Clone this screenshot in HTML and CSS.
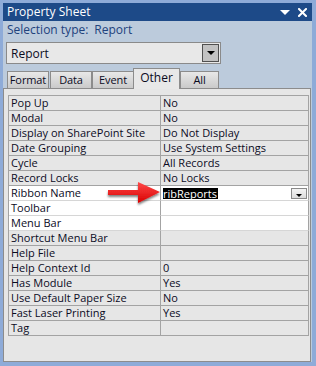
FILE: index.html
```html
<!DOCTYPE html>
<html>
<head>
<meta charset="utf-8">
<link rel="stylesheet" href="styles.css">
</head>
<body>
<div class="window">
  <div class="titlebar">
    <span class="title">Property Sheet</span>
    <div class="tb-icons">
      <svg class="tb-menu" width="10" height="6" viewBox="0 0 10 6"><polygon points="0,0 10,0 5,5" fill="#ffffff"/></svg>
      <svg class="tb-close" width="9" height="9" viewBox="0 0 9 9"><path d="M1 1 L8 8 M8 1 L1 8" stroke="#ffffff" stroke-width="2" stroke-linecap="square"/></svg>
    </div>
  </div>
  <div class="body">
    <div class="seltype"><span>Selection type:</span><span class="seltype-val">Report</span></div>
    <div class="combo">
      <span class="combo-text">Report</span>
      <span class="combo-btn"><svg width="8" height="5" viewBox="0 0 8 5"><polygon points="0,0 8,0 4,4" fill="#000"/></svg></span>
    </div>
    <div class="tabs">
      <div class="tab tab-format">Format</div>
      <div class="tab tab-data">Data</div>
      <div class="tab tab-event">Event</div>
      <div class="tab tab-other active">Other</div>
      <div class="tab tab-all">All</div>
    </div>
    <div class="panel">
      <div class="grid">
        <div class="cell name">Pop Up</div><div class="cell val">No</div>
        <div class="cell name">Modal</div><div class="cell val">No</div>
        <div class="cell name">Display on SharePoint Site</div><div class="cell val">Do Not Display</div>
        <div class="cell name">Date Grouping</div><div class="cell val">Use System Settings</div>
        <div class="cell name">Cycle</div><div class="cell val">All Records</div>
        <div class="cell name">Record Locks</div><div class="cell val">No Locks</div>
        <div class="cell name white">Ribbon Name</div><div class="cell val white edit"><span class="sel">ribReports</span><span class="cell-btn"><svg width="6" height="3" viewBox="0 0 6 3"><polygon points="0,0 6,0 3,3" fill="#000"/></svg></span></div>
        <div class="cell name white">Toolbar</div><div class="cell val white"></div>
        <div class="cell name white">Menu Bar</div><div class="cell val white"></div>
        <div class="cell name">Shortcut Menu Bar</div><div class="cell val"></div>
        <div class="cell name">Help File</div><div class="cell val"></div>
        <div class="cell name">Help Context Id</div><div class="cell val">0</div>
        <div class="cell name">Has Module</div><div class="cell val">Yes</div>
        <div class="cell name">Use Default Paper Size</div><div class="cell val">No</div>
        <div class="cell name">Fast Laser Printing</div><div class="cell val">Yes</div>
        <div class="cell name">Tag</div><div class="cell val"></div>
      </div>
    </div>
  </div>
  <svg class="arrow" width="62" height="30" viewBox="0 0 62 30">
    <defs>
      <linearGradient id="ag" x1="0" y1="0" x2="0" y2="1">
        <stop offset="0" stop-color="#ff4a4a"/>
        <stop offset="1" stop-color="#d80000"/>
      </linearGradient>
      <filter id="sh" x="-20%" y="-20%" width="150%" height="160%">
        <feDropShadow dx="0" dy="2" stdDeviation="1.3" flood-color="#000" flood-opacity="0.5"/>
      </filter>
    </defs>
    <polygon filter="url(#sh)" points="3,12 33,12 33,4 55,14 33,25 33,17 3,17" fill="url(#ag)"/>
  </svg>
</div>
</body>
</html>
```
FILE: styles.css
```css
html, body {
  margin: 0;
  padding: 0;
  background: #ffffff;
}
.window {
  position: relative;
  width: 316px;
  height: 366px;
  box-sizing: border-box;
  background: #8eabd8;
  padding: 3px 4px 4px 3px;
  display: flex;
  flex-direction: column;
  font-family: "Open Sans", "Noto Sans", sans-serif;
  font-size: 11px;
  color: #0b0b1e;
}
.titlebar {
  height: 18px;
  background: #1d4a88;
  display: flex;
  align-items: center;
  justify-content: space-between;
  padding: 0 0 0 4px;
  color: #ffffff;
}
.title {
  font-size: 12px;
  line-height: 18px;
}
.tb-icons {
  display: flex;
  align-items: center;
  gap: 8px;
  padding-right: 5px;
}
.tb-menu {
  display: block;
  margin-top: 1px;
}
.tb-close {
  display: block;
}
.body {
  flex: 1;
  background: #bccbdc;
  display: flex;
  flex-direction: column;
}
.seltype {
  height: 18px;
  line-height: 18px;
  padding-left: 4px;
  font-size: 12px;
  color: #21427c;
  display: flex;
}
.seltype-val {
  margin-left: 6px;
}
.combo {
  margin: 3px 0 0 3px;
  width: 215px;
  height: 22px;
  box-sizing: border-box;
  border: 1px solid #8a8a8a;
  background: #e8e8e8;
  display: flex;
  align-items: center;
  justify-content: space-between;
  padding: 0 1px 0 4px;
}
.combo-text {
  font-size: 12px;
}
.combo-btn {
  width: 17px;
  height: 18px;
  box-sizing: border-box;
  border: 1px solid #505050;
  background: #c2c2c2;
  display: flex;
  align-items: center;
  justify-content: center;
}
.combo-btn svg {
  display: block;
  margin-top: 1px;
}
.tabs {
  margin-top: 4px;
  height: 20px;
  display: flex;
  align-items: flex-end;
  padding-left: 4px;
  position: relative;
  z-index: 2;
}
.tab {
  height: 17px;
  box-sizing: border-box;
  border: 1px solid #8c8c8c;
  border-bottom: none;
  background: linear-gradient(#e8e8e8, #cacaca);
  text-align: center;
  line-height: 16px;
  font-size: 11px;
  letter-spacing: -0.1px;
}
.tab-format { width: 42px; }
.tab-data { width: 42px; margin-left: 1px; }
.tab-event { width: 42px; }
.tab-other { width: 47px; margin-left: -1px; }
.tab-all { width: 39px; }
.tab.active {
  height: 21px;
  margin-bottom: -1px;
  background: #e8e8e8;
  line-height: 17px;
  font-size: 12px;
  letter-spacing: 0;
}
.panel {
  flex: 1;
  margin: 0 1px 0 0;
  border: 1px solid #8c8c8c;
  background: #e6e6e6;
  padding: 6px 1px 0 4px;
}
.grid {
  display: grid;
  grid-template-columns: 152px 148px;
  border-top: 1px solid #a3a3a3;
  border-left: 1px solid #a3a3a3;
}
.cell {
  height: 15px;
  box-sizing: border-box;
  border-right: 1px solid #a3a3a3;
  border-bottom: 1px solid #a3a3a3;
  padding-left: 2px;
  line-height: 14px;
  white-space: nowrap;
  overflow: hidden;
}
.cell.white {
  background: #ffffff;
  border-bottom-color: #d6d6d6;
}
.edit {
  display: flex;
  align-items: center;
  justify-content: space-between;
  padding-right: 1px;
}
.sel {
  background: #000000;
  color: #ffffff;
  line-height: 11px;
  height: 11px;
  padding-right: 1px;
}
.cell-btn {
  width: 16px;
  height: 11px;
  box-sizing: border-box;
  border: 1px solid #8a8a8a;
  background: linear-gradient(#f4f4f4, #dcdcdc);
  display: flex;
  align-items: flex-end;
  justify-content: center;
  padding-bottom: 1px;
}
.cell-btn svg {
  display: block;
}
.arrow {
  position: absolute;
  left: 105px;
  top: 178px;
}
```
